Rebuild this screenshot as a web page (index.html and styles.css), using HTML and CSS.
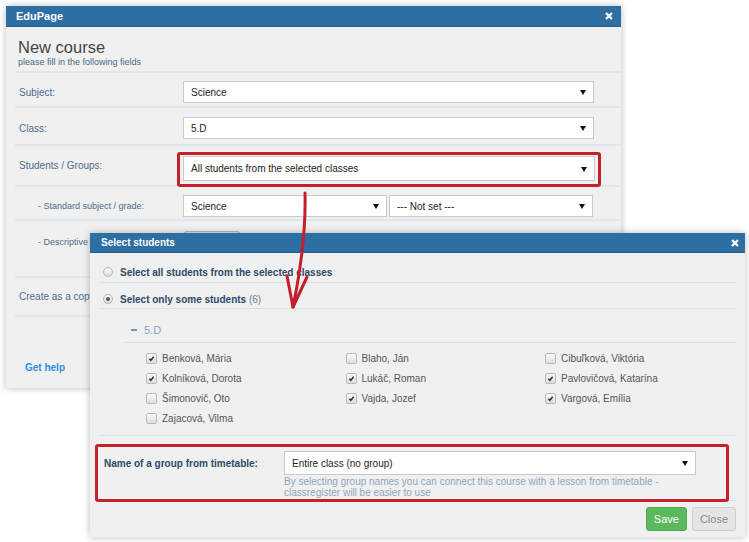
FILE: index.html
```html
<!DOCTYPE html>
<html lang="en">
<head>
  <meta charset="UTF-8" />
  <title>New course - Select students</title>
  <link rel="stylesheet" href="styles.css">
</head>
<body>

  <!-- Back dialog: New course -->
  <div class="dialog dialog-back">
    <div class="dialog-head">
      <span>EduPage</span>
      <svg class="close-x" viewBox="0 0 8 8"><path d="M1 1L7 7M7 1L1 7" /></svg>
    </div>
    <div class="dialog-body">
      <div class="title-block">
        <div class="title">New course</div>
        <div class="subtitle">please fill in the following fields</div>
      </div>

      <div class="form-row row-subject">
        <div class="label">Subject:</div>
        <div class="select">Science</div>
      </div>

      <div class="form-row row-class">
        <div class="label">Class:</div>
        <div class="select">5.D</div>
      </div>

      <div class="form-row row-students">
        <div class="label">Students / Groups:</div>
        <div class="select select-tall">All students from the selected classes</div>
      </div>

      <div class="form-row row-standard">
        <div class="label label-sub">- Standard subject / grade:</div>
        <div class="select-pair">
          <div class="select select-half">Science</div>
          <div class="select select-half">--- Not set ---</div>
        </div>
      </div>

      <div class="form-row row-descriptive">
        <div class="label label-sub">- Descriptive evaluation:</div>
        <div class="mini-btn"></div>
      </div>

      <div class="form-row row-copy">
        <div class="label">Create as a copy of:</div>
      </div>

      <div class="help-foot">
        <a href="#" class="help-link">Get help</a>
      </div>
    </div>
  </div>

  <!-- Front dialog: Select students -->
  <div class="dialog dialog-front">
    <div class="dialog-head">
      <span>Select students</span>
      <svg class="close-x" viewBox="0 0 8 8"><path d="M1 1L7 7M7 1L1 7" /></svg>
    </div>
    <div class="dialog-body front-body">
      <div class="radio-row row-all">
        <span class="radio"></span>
        <span class="radio-text">Select all students from the selected classes</span>
      </div>
      <div class="radio-row row-some">
        <span class="radio checked"></span>
        <span class="radio-text">Select only some students <span class="count">(6)</span></span>
      </div>

      <div class="class-head">
        <span class="dash"></span>
        <span class="class-name">5.D</span>
      </div>

      <div class="student-grid" id="studentGrid"></div>

      <div class="group-row">
        <div class="group-label">Name of a group from timetable:</div>
        <div class="group-ctrl">
          <div class="select select-group">Entire class (no group)</div>
          <div class="group-hint">By selecting group names you can connect this course with a lesson from timetable - classregister will be easier to use</div>
        </div>
      </div>

      <div class="dialog-foot">
        <button class="btn btn-save">Save</button>
        <button class="btn btn-close">Close</button>
      </div>
    </div>
  </div>

  <!-- Annotations -->
  <div class="mark mark-students"></div>
  <div class="mark mark-group"></div>
  <svg class="arrow" viewBox="0 0 749 542">
    <path d="M305 193 C306 230 301 268 293 307" />
    <path d="M287 276 L293 307 L307 277" />
  </svg>

  <script>
    const students = [
      ['Benková, Mária', true], ['Blaho, Ján', false], ['Cibuľková, Viktória', false],
      ['Kolníková, Dorota', true], ['Lukáč, Roman', true], ['Pavlovičová, Katarína', true],
      ['Šimonovič, Oto', false], ['Vajda, Jozef', true], ['Vargová, Emília', true],
      ['Zajacová, Vilma', false]
    ];

    const grid = document.getElementById('studentGrid');
    students.forEach(([name, checked]) => {
      const div = document.createElement('div');
      div.className = 'student';
      div.innerHTML = `
        <span class="checkbox${checked ? ' checked' : ''}">
          ${checked ? '<svg viewBox="0 0 10 10"><path d="M2.6 5.2L4.3 7L7.4 3" /></svg>' : ''}
        </span>
        <span class="student-name">${name}</span>
      `;
      grid.appendChild(div);
    });
  </script>
</body>
</html>
```

FILE: styles.css
```css
body {
  margin: 0;
  width: 749px;
  height: 542px;
  position: relative;
  overflow: hidden;
  background: #fff;
  font-family: "Liberation Sans", Arial, sans-serif;
  font-size: 10px;
}

/* dialogs */
.dialog {
  position: absolute;
  background: #f0f0f0;
  box-shadow: 0 0 7px rgba(0, 0, 0, 0.28);
}

.dialog-back {
  left: 6px;
  top: 6px;
  width: 615px;
  height: 382px;
}

.dialog-front {
  left: 90px;
  top: 233px;
  width: 655px;
  height: 304px;
}

.dialog-head {
  display: flex;
  align-items: center;
  justify-content: space-between;
  box-sizing: border-box;
  background: #2d6ea3;
  border-bottom: 1px solid #265f8e;
  color: #fff;
  font-weight: bold;
}

.dialog-back .dialog-head {
  height: 21px;
  padding: 0 8px 0 10px;
  font-size: 11px;
}

.dialog-front .dialog-head {
  height: 20px;
  padding: 0 6px 0 11px;
  font-size: 10px;
}

.close-x {
  width: 8px;
  height: 8px;
}

.close-x path {
  stroke: #fff;
  stroke-width: 2.3;
  fill: none;
}

/* back dialog body */
.dialog-back .dialog-body {
  padding-left: 9px;
}

.title-block {
  padding: 11px 0 3px 3px;
  border-bottom: 2px solid #e0e6ec;
}

.title {
  font-size: 16.5px;
  line-height: 19px;
  color: #444;
}

.subtitle {
  font-size: 9px;
  line-height: 11px;
  color: #4a6888;
}

.form-row {
  display: flex;
  align-items: center;
  border-bottom: 2px solid #e0e6ec;
}

.label {
  width: 164px;
  padding-left: 4px;
  color: #4e6c8a;
  flex-shrink: 0;
}

.label-sub {
  width: 145px;
  padding-left: 23px;
  font-size: 9px;
}

.row-subject { padding: 8px 0 3px; }
.row-class { padding: 9px 0 5px; }
.row-students { padding: 10px 0 4px; }
.row-standard { padding: 8px 0 2px; }

.row-students .label {
  margin-top: -6px;
}

.row-descriptive {
  align-items: flex-start;
  height: 57px;
  padding-top: 10px;
  box-sizing: border-box;
}

.row-descriptive .label {
  padding-top: 6px;
}

.row-copy {
  height: 37px;
}

.select {
  position: relative;
  width: 411px;
  height: 22px;
  box-sizing: border-box;
  display: flex;
  align-items: center;
  padding-left: 7px;
  background: #fff;
  border: 1px solid #c9c9c9;
  color: #222;
  font-size: 10px;
}

.select::after {
  content: "";
  position: absolute;
  right: 7px;
  top: 50%;
  margin-top: -2px;
  border-left: 3.5px solid transparent;
  border-right: 3.5px solid transparent;
  border-top: 5px solid #111;
}

.select-tall {
  height: 25px;
  width: 412px;
}

.select-pair {
  display: flex;
  gap: 2px;
}

.select-half {
  width: 204px;
}

.mini-btn {
  width: 56px;
  height: 22px;
  margin-left: 1px;
  box-sizing: border-box;
  background: #e4e4e4;
  border: 1px solid #b9b9b9;
  border-radius: 2px;
}

.help-foot {
  padding: 45px 0 0 10px;
}

.help-link {
  color: #2b8fe3;
  font-weight: bold;
  text-decoration: none;
  line-height: 12px;
}

/* front dialog body */
.front-body {
  padding: 0 8px 0 9px;
}

.radio-row {
  display: flex;
  align-items: center;
  gap: 7px;
  padding-left: 4px;
  box-sizing: border-box;
  border-bottom: 1px solid #d6e1ea;
}

.row-all { height: 30px; padding-top: 9px; }
.row-some { height: 26px; padding-top: 7px; }

.radio {
  width: 10px;
  height: 10px;
  box-sizing: border-box;
  border-radius: 50%;
  border: 1px solid #b3b3b3;
  background: linear-gradient(#fbfbfb, #dcdcdc);
  display: flex;
  align-items: center;
  justify-content: center;
}

.radio.checked::after {
  content: "";
  width: 4px;
  height: 4px;
  border-radius: 50%;
  background: #555;
}

.radio-text {
  font-weight: bold;
  color: #2c4a68;
}

.count {
  font-weight: normal;
  color: #6b7e90;
}

.class-head {
  display: flex;
  align-items: center;
  gap: 7px;
  height: 34px;
  padding: 8px 0 0 7px;
  margin-left: 25px;
  box-sizing: border-box;
  border-bottom: 1px solid #d6e1ea;
  font-size: 11px;
}

.dash {
  width: 6px;
  height: 2px;
  background: #6f97c2;
}

.class-name {
  color: #7fa3c9;
}

.student-grid {
  display: grid;
  grid-template-columns: repeat(3, 199.5px);
  grid-auto-rows: 20px;
  padding: 5px 0 7px 47px;
  border-bottom: 1px solid #d6e1ea;
}

.student {
  display: flex;
  align-items: center;
  gap: 5px;
}

.checkbox {
  width: 11px;
  height: 11px;
  box-sizing: border-box;
  border: 1px solid #b8b8b8;
  border-radius: 2px;
  background: linear-gradient(#fafafa, #dedede);
  display: flex;
}

.checkbox svg {
  width: 9px;
  height: 9px;
}

.checkbox path {
  fill: none;
  stroke: #333;
  stroke-width: 1.7;
}

.student-name {
  color: #555;
}

.group-row {
  display: flex;
  align-items: flex-start;
  padding: 15px 0 2px;
  border-bottom: 1px solid #d6e1ea;
}

.group-label {
  width: 180px;
  padding: 7px 0 0 5px;
  font-weight: bold;
  color: #2c4a68;
}

.select-group {
  width: 412px;
  height: 24px;
}

.group-hint {
  padding-top: 1px;
  width: 380px;
  font-size: 10px;
  line-height: 11px;
  color: #8ea6bd;
}

.dialog-foot {
  display: flex;
  justify-content: flex-end;
  gap: 5px;
  padding: 6px 1px 0 0;
}

.btn {
  height: 24px;
  padding: 0 7px;
  border-radius: 3px;
  font-family: "Liberation Sans", Arial, sans-serif;
  font-size: 11px;
}

.btn-save {
  background: #5cb85c;
  border: 1px solid #4cae4c;
  color: #fff;
}

.btn-close {
  background: #e5e5e5;
  border: 1px solid #cfcfcf;
  color: #8a8a8a;
}

/* annotations */
.mark {
  position: absolute;
  box-sizing: border-box;
  border: 3px solid #c5212b;
  border-radius: 3px;
}

.mark-students {
  left: 177px;
  top: 152px;
  width: 424px;
  height: 35px;
}

.mark-group {
  left: 95px;
  top: 444px;
  width: 634px;
  height: 58px;
}

.arrow {
  position: absolute;
  left: 0;
  top: 0;
  width: 749px;
  height: 542px;
  pointer-events: none;
}

.arrow path {
  fill: none;
  stroke: #c21f2a;
  stroke-width: 3;
  stroke-linecap: round;
  stroke-linejoin: round;
}
```
